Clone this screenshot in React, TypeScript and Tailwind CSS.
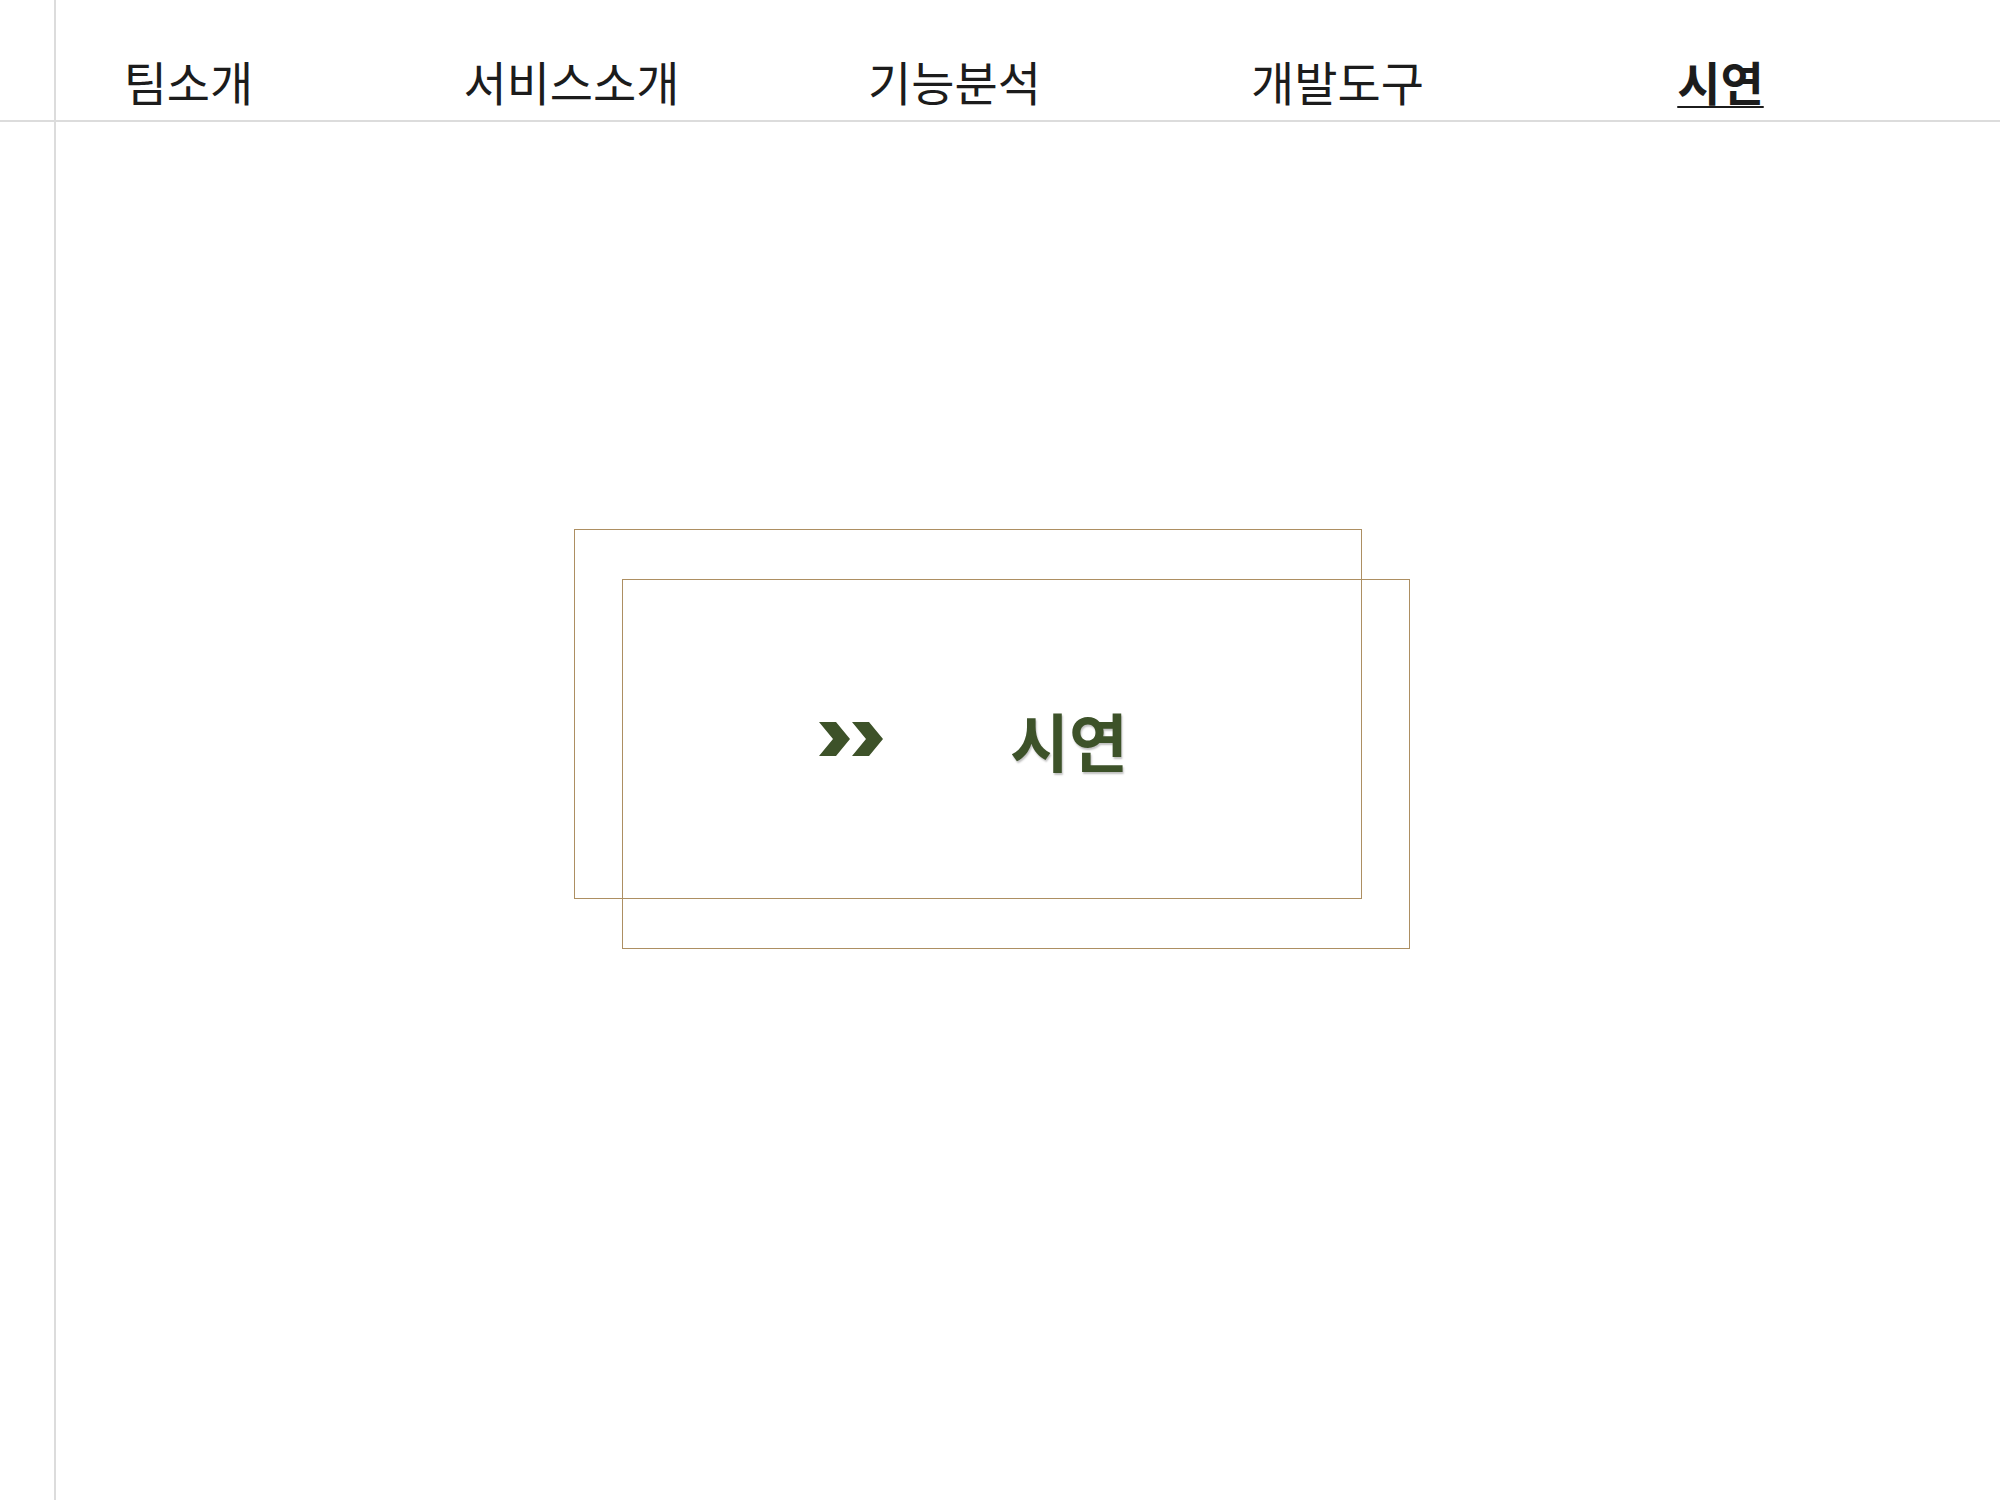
import React from "react";

const navItems = [
  { name: "팀소개", active: false },
  { name: "서비스소개", active: false },
  { name: "기능분석", active: false },
  { name: "개발도구", active: false },
  { name: "시연", active: true },
];

const Chevrons = () => (
  <svg width="64" height="34" viewBox="0 0 64 34" className="shrink-0">
    <polygon points="0,0 17,0 31,17 17,34 0,34 14,17" fill="#3d5229" />
    <polygon points="33,0 50,0 64,17 50,34 33,34 47,17" fill="#3d5229" />
  </svg>
);

const App = () => {
  return (
    <div
      className="min-h-[1500px] w-full bg-white text-[#1c1c1c]"
      style={{ fontFamily: '"Noto Sans CJK KR", "Noto Sans", sans-serif' }}
    >
      {/* Header */}
      <header className="flex h-[122px] border-b-2 border-[#dcdcdc]">
        <div className="w-[56px] shrink-0 border-r-2 border-[#dcdcdc]" />
        <nav className="-ml-[59px] flex items-end pb-[13px]">
          {navItems.map((item) => (
            <a
              key={item.name}
              href="#"
              className="w-[383px] text-center text-[47px] leading-[52px]"
            >
              <span
                className={
                  item.active
                    ? "font-bold underline decoration-2 underline-offset-[5px]"
                    : "font-normal"
                }
              >
                {item.name}
              </span>
            </a>
          ))}
        </nav>
      </header>

      {/* Body */}
      <div className="flex min-h-[1378px]">
        <div className="w-[56px] shrink-0 border-r-2 border-[#dcdcdc]" />
        <main className="flex-1 pl-[518px] pt-[407px]">
          <div className="grid w-[836px]">
            <div className="col-start-1 row-start-1 mr-[48px] mb-[50px] h-[370px] border-[1.5px] border-[#ad8f62]" />
            <div className="col-start-1 row-start-1 ml-[48px] mt-[50px] h-[370px] border-[1.5px] border-[#ad8f62]" />
            <div className="col-start-1 row-start-1 flex items-center pl-[245px]">
              <Chevrons />
              <span
                className="ml-[127px] text-[64px] font-semibold leading-none text-[#3d5229]"
                style={{ textShadow: "1px 2px 2px rgba(0,0,0,0.25)" }}
              >
                시연
              </span>
            </div>
          </div>
        </main>
      </div>
    </div>
  );
};

export default App;
